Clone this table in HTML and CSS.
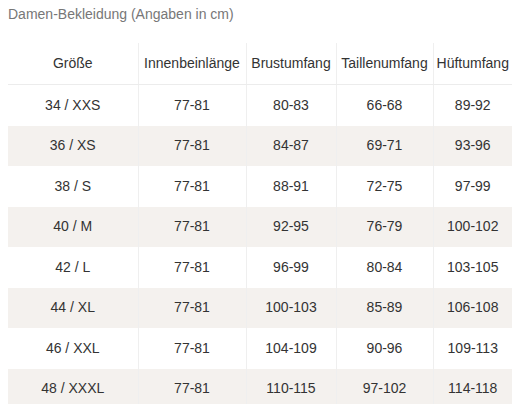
FILE: index.html
```html
<!DOCTYPE html>
<html lang="de">
<head>
<meta charset="utf-8">
<title>Damen-Bekleidung</title>
<link rel="stylesheet" href="styles.css">
</head>
<body>
<p class="caption">Damen-Bekleidung (Angaben in cm)</p>
<table class="sizes">
  <colgroup>
    <col class="c1"><col class="c2"><col class="c3"><col class="c4"><col class="c5">
  </colgroup>
  <thead>
    <tr><th>Größe</th><th>Innenbeinlänge</th><th>Brustumfang</th><th>Taillenumfang</th><th>Hüftumfang</th></tr>
  </thead>
  <tbody>
    <tr><td>34 / XXS</td><td>77-81</td><td>80-83</td><td>66-68</td><td>89-92</td></tr>
    <tr><td>36 / XS</td><td>77-81</td><td>84-87</td><td>69-71</td><td>93-96</td></tr>
    <tr><td>38 / S</td><td>77-81</td><td>88-91</td><td>72-75</td><td>97-99</td></tr>
    <tr><td>40 / M</td><td>77-81</td><td>92-95</td><td>76-79</td><td>100-102</td></tr>
    <tr><td>42 / L</td><td>77-81</td><td>96-99</td><td>80-84</td><td>103-105</td></tr>
    <tr><td>44 / XL</td><td>77-81</td><td>100-103</td><td>85-89</td><td>106-108</td></tr>
    <tr><td>46 / XXL</td><td>77-81</td><td>104-109</td><td>90-96</td><td>109-113</td></tr>
    <tr><td>48 / XXXL</td><td>77-81</td><td>110-115</td><td>97-102</td><td>114-118</td></tr>
  </tbody>
</table>
</body>
</html>
```
FILE: styles.css
```css
html, body {
  background: #fff;
}
body {
  margin: 6px 8px 0 8px;
  font-family: "Liberation Sans", Arial, sans-serif;
  font-size: 14px;
  color: #333;
}
.caption {
  margin: 0 0 21px 0;
  line-height: 16px;
  color: #777;
}
.sizes {
  border-collapse: collapse;
  table-layout: fixed;
  width: 504px;
}
.c1 { width: 130px; }
.c2 { width: 108px; }
.c3 { width: 90px; }
.c4 { width: 97px; }
.c5 { width: 79px; }
.sizes th,
.sizes td {
  text-align: center;
  font-weight: normal;
  line-height: 17.5px;
  padding: 11.5px 0;
  white-space: nowrap;
  border-left: 1px solid #efefef;
  color: #333;
}
.sizes th:first-child,
.sizes td:first-child {
  border-left: none;
}
.sizes th {
  padding: 11.75px 0;
  border-bottom: 1px solid #ececec;
}
.sizes tbody tr:nth-child(even) td {
  background: #f4f1ee;
}
```
